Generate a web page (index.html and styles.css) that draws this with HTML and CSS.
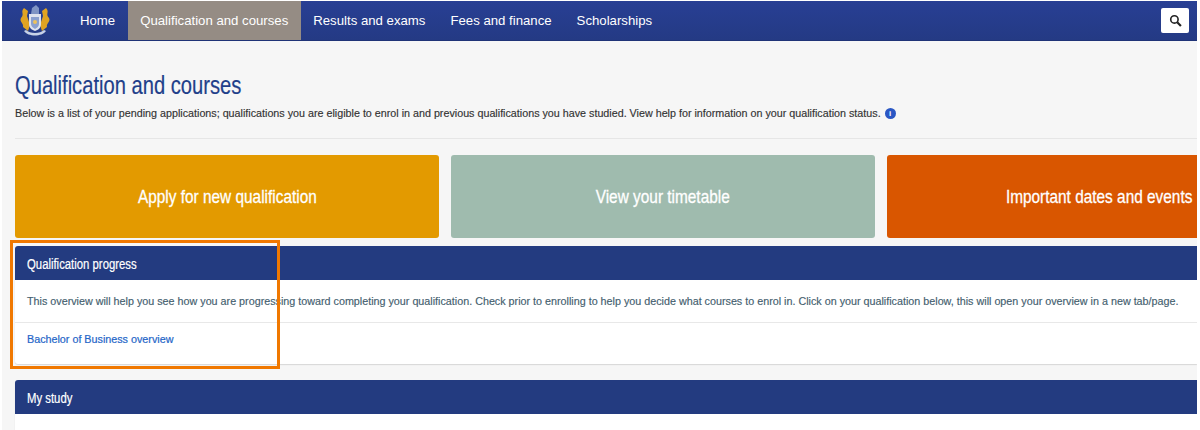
FILE: index.html
```html
<!DOCTYPE html>
<html lang="en">
<head>
    <meta charset="UTF-8">
    <title>Qualification and courses</title>
    <link rel="stylesheet" href="styles.css">
</head>
<body>
    <div class="page">
        <nav class="topbar">
            <svg class="crest" width="32" height="36" viewBox="0 0 32 36">
                <path d="M12 11 L13 5 L17 2 L20 5 L20 11 Z" fill="#7f94c4"/>
                <path d="M5 5 C1 9 6 11 2 15 C0 19 5 20 4 24 L9 28 L11 22 L8 13 L9 8 Z" fill="#e0a322"/>
                <path d="M27 5 C31 9 26 11 30 15 C32 19 27 20 28 24 L23 28 L21 22 L24 13 L23 8 Z" fill="#e0a322"/>
                <path d="M10 11 H22 V21 C22 25 19 27 16 28 C13 27 10 25 10 21 Z" fill="#dfe3ee"/>
                <path d="M12 14 H20 V21 C20 23 18 25 16 26 C14 25 12 23 12 21 Z" fill="#8ba0cf"/>
                <circle cx="16" cy="19" r="2" fill="#eec25c"/>
                <path d="M5 28 C9 34 23 34 27 28 L25 27 C21 31 11 31 7 27 Z" fill="#c7d2e8"/>
            </svg>
            <a class="nav-link" href="#">Home</a>
            <a class="nav-link active" href="#">Qualification and courses</a>
            <a class="nav-link" href="#">Results and exams</a>
            <a class="nav-link" href="#">Fees and finance</a>
            <a class="nav-link" href="#">Scholarships</a>
            <button class="search-btn">
                <svg width="13" height="13" viewBox="0 0 12 12">
                    <circle cx="5" cy="5" r="3.4" fill="none" stroke="#222" stroke-width="1.5"/>
                    <path d="M7.6 7.6 L11 11" stroke="#222" stroke-width="2"/>
                </svg>
            </button>
        </nav>

        <main class="content">
            <h1><span class="narrow">Qualification and courses</span></h1>
            <p class="intro">
                Below is a list of your pending applications; qualifications you are eligible to enrol in and previous qualifications you have studied. View help for information on your qualification status.
                <span class="info">i</span>
            </p>
            <hr class="rule">

            <div class="tiles">
                <a class="tile tile-yellow" href="#"><span class="narrow">Apply for new qualification</span></a>
                <a class="tile tile-green" href="#"><span class="narrow">View your timetable</span></a>
                <a class="tile tile-orange" href="#"><span class="narrow">Important dates and events</span></a>
            </div>

            <section class="panel">
                <h2 class="panel-head"><span class="narrow">Qualification progress</span></h2>
                <p class="panel-text">This overview will help you see how you are progressing toward completing your qualification. Check prior to enrolling to help you decide what courses to enrol in. Click on your qualification below, this will open your overview in a new tab/page.</p>
                <div class="panel-links">
                    <a href="#">Bachelor of Business overview</a>
                </div>
            </section>

            <section class="panel">
                <h2 class="panel-head"><span class="narrow">My study</span></h2>
            </section>
        </main>

        <!-- annotation drawn over the screenshot -->
        <div class="highlight"></div>
    </div>
</body>
</html>
```

FILE: styles.css
```css
* {
    margin: 0;
    padding: 0;
    box-sizing: border-box;
}

html, body {
    height: 430px;
    overflow: hidden;
    background: #ffffff;
}

body {
    font-family: 'Liberation Sans', Arial, sans-serif;
    color: #333333;
}

.page {
    position: relative;
    width: 1195px;
    height: 429px;
    margin: 1px 0 0 2px;
    background: #f6f6f6;
    overflow: hidden;
}

/* no condensed font is installed, so squeeze the regular one */
.narrow {
    display: inline-block;
    transform: scaleX(0.81);
}

.topbar {
    display: flex;
    align-items: stretch;
    height: 40px;
    background: linear-gradient(#283f94, #243a84);
    border-bottom: 1px solid #1f3377;
}

.crest {
    align-self: center;
    margin: 0 16.5px 0 17px;
}

.nav-link {
    display: flex;
    align-items: center;
    padding: 0 12.5px 1px;
    font-size: 13.2px;
    color: #ffffff;
    text-decoration: none;
}

.nav-link.active {
    background: #958c84;
}

.search-btn {
    align-self: center;
    display: flex;
    align-items: center;
    justify-content: center;
    width: 28px;
    height: 25px;
    margin-left: auto;
    margin-right: 8px;
    background: #ffffff;
    border: none;
    border-radius: 2px;
}

.content {
    padding: 0 0 0 13px;
}

h1 {
    margin-top: 29px;
    font-size: 26px;
    font-weight: normal;
    line-height: 30px;
    color: #1f3f8a;
    -webkit-text-stroke: 0.2px #1f3f8a;
}

h1 .narrow {
    transform: scaleX(0.775);
    transform-origin: left center;
}

.intro {
    display: flex;
    align-items: center;
    gap: 4px;
    margin-top: 5px;
    font-size: 10.74px;
    line-height: 16px;
    white-space: nowrap;
    color: #333333;
    -webkit-text-stroke: 0.15px #333333;
}

.info {
    display: inline-block;
    width: 11px;
    height: 11px;
    border-radius: 50%;
    background: #2a57c4;
    color: #ffffff;
    font-size: 8px;
    font-weight: bold;
    line-height: 11px;
    text-align: center;
    -webkit-text-stroke: 0;
}

.rule {
    height: 0;
    margin-top: 17px;
    border: none;
    border-top: 1px solid #e6e6e6;
}

.tiles {
    display: flex;
    gap: 12px;
    margin-top: 16px;
    width: 1400px;
}

.tile {
    display: flex;
    align-items: center;
    justify-content: center;
    flex: none;
    width: 424px;
    height: 83px;
    border-radius: 3px;
    font-size: 19px;
    white-space: nowrap;
    color: #ffffff;
    text-decoration: none;
    -webkit-text-stroke: 0.3px #ffffff;
}

.tile-yellow {
    background: #e39a00;
}

.tile-green {
    background: #9fbbae;
}

.tile-orange {
    background: #d95600;
}

.panel {
    margin-top: 8px;
    background: #ffffff;
    border-radius: 3px 0 0 3px;
    box-shadow: 0 1px 1px #d8d8d8;
}

.panel + .panel {
    margin-top: 16px;
    height: 80px;
}

.panel-head {
    height: 34px;
    padding: 0 12px;
    background: #233b80;
    border-radius: 3px 0 0 0;
    font-size: 14px;
    font-weight: normal;
    line-height: 36px;
    color: #ffffff;
    -webkit-text-stroke: 0.2px #ffffff;
}

.panel-head .narrow {
    transform-origin: left center;
}

.panel-text {
    height: 43px;
    padding: 0 12px;
    border-bottom: 1px solid #e8e8e8;
    font-size: 10.75px;
    line-height: 42px;
    white-space: nowrap;
    color: #44606e;
    -webkit-text-stroke: 0.15px #44606e;
}

.panel-links {
    height: 41px;
    padding: 9px 12px 0;
    font-size: 10.75px;
    line-height: 14px;
}

.panel-links a {
    color: #1f66c8;
    text-decoration: none;
    -webkit-text-stroke: 0.2px #1f66c8;
}

.highlight {
    position: absolute;
    left: 8px;
    top: 239px;
    width: 270px;
    height: 129px;
    border: 3px solid #f07800;
    pointer-events: none;
}
```
